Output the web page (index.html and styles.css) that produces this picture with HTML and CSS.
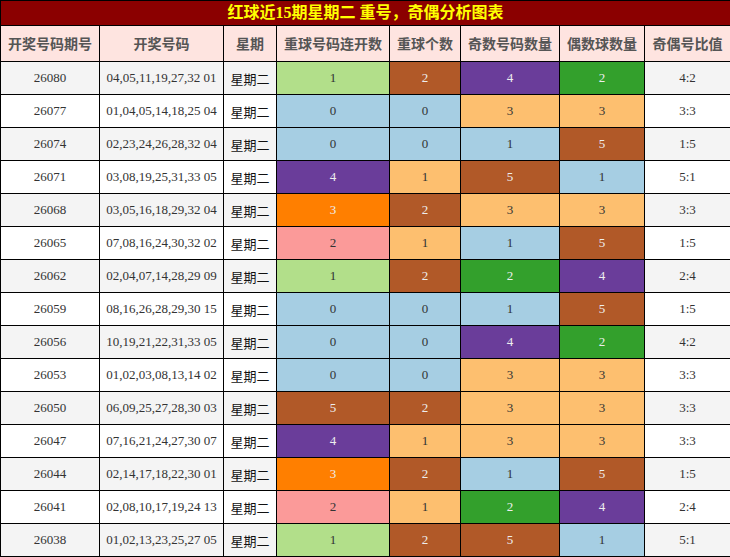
FILE: index.html
```html
<!DOCTYPE html>
<html>
<head>
<meta charset="utf-8">
<link rel="stylesheet" href="styles.css">
</head>
<body>
<table class="chart">
<colgroup>
<col class="c1"><col class="c2"><col class="c3"><col class="c4"><col class="c5"><col class="c6"><col class="c7"><col class="c8">
</colgroup>
<thead>
<tr class="title"><th colspan="8">红球近15期星期二 重号，奇偶分析图表</th></tr>
<tr class="head"><th>开奖号码期号</th><th>开奖号码</th><th>星期</th><th>重球号码连开数</th><th>重球个数</th><th>奇数号码数量</th><th>偶数球数量</th><th>奇偶号比值</th></tr>
</thead>
<tbody>
<tr><td>26080</td><td>04,05,11,19,27,32 01</td><td class="wk">星期二</td><td class="lg">1</td><td class="br">2</td><td class="pu">4</td><td class="gr">2</td><td>4:2</td></tr>
<tr><td>26077</td><td>01,04,05,14,18,25 04</td><td class="wk">星期二</td><td class="lb">0</td><td class="lb">0</td><td class="lo">3</td><td class="lo">3</td><td>3:3</td></tr>
<tr><td>26074</td><td>02,23,24,26,28,32 04</td><td class="wk">星期二</td><td class="lb">0</td><td class="lb">0</td><td class="lb">1</td><td class="br">5</td><td>1:5</td></tr>
<tr><td>26071</td><td>03,08,19,25,31,33 05</td><td class="wk">星期二</td><td class="pu">4</td><td class="lo">1</td><td class="br">5</td><td class="lb">1</td><td>5:1</td></tr>
<tr><td>26068</td><td>03,05,16,18,29,32 04</td><td class="wk">星期二</td><td class="or">3</td><td class="br">2</td><td class="lo">3</td><td class="lo">3</td><td>3:3</td></tr>
<tr><td>26065</td><td>07,08,16,24,30,32 02</td><td class="wk">星期二</td><td class="pk">2</td><td class="lo">1</td><td class="lb">1</td><td class="br">5</td><td>1:5</td></tr>
<tr><td>26062</td><td>02,04,07,14,28,29 09</td><td class="wk">星期二</td><td class="lg">1</td><td class="br">2</td><td class="gr">2</td><td class="pu">4</td><td>2:4</td></tr>
<tr><td>26059</td><td>08,16,26,28,29,30 15</td><td class="wk">星期二</td><td class="lb">0</td><td class="lb">0</td><td class="lb">1</td><td class="br">5</td><td>1:5</td></tr>
<tr><td>26056</td><td>10,19,21,22,31,33 05</td><td class="wk">星期二</td><td class="lb">0</td><td class="lb">0</td><td class="pu">4</td><td class="gr">2</td><td>4:2</td></tr>
<tr><td>26053</td><td>01,02,03,08,13,14 02</td><td class="wk">星期二</td><td class="lb">0</td><td class="lb">0</td><td class="lo">3</td><td class="lo">3</td><td>3:3</td></tr>
<tr><td>26050</td><td>06,09,25,27,28,30 03</td><td class="wk">星期二</td><td class="br">5</td><td class="br">2</td><td class="lo">3</td><td class="lo">3</td><td>3:3</td></tr>
<tr><td>26047</td><td>07,16,21,24,27,30 07</td><td class="wk">星期二</td><td class="pu">4</td><td class="lo">1</td><td class="lo">3</td><td class="lo">3</td><td>3:3</td></tr>
<tr><td>26044</td><td>02,14,17,18,22,30 01</td><td class="wk">星期二</td><td class="or">3</td><td class="br">2</td><td class="lb">1</td><td class="br">5</td><td>1:5</td></tr>
<tr><td>26041</td><td>02,08,10,17,19,24 13</td><td class="wk">星期二</td><td class="pk">2</td><td class="lo">1</td><td class="gr">2</td><td class="pu">4</td><td>2:4</td></tr>
<tr><td>26038</td><td>01,02,13,23,25,27 05</td><td class="wk">星期二</td><td class="lg">1</td><td class="br">2</td><td class="br">5</td><td class="lb">1</td><td>5:1</td></tr>
</tbody>
</table>
</body>
</html>
```
FILE: styles.css
```css
html, body {
  margin: 0;
  padding: 0;
  background: #ffffff;
}
.chart {
  border-collapse: collapse;
  table-layout: fixed;
  width: 730px;
  font-family: "Liberation Serif", "Noto Sans CJK SC", serif;
}
.c1 { width: 99px; }
.c2 { width: 124px; }
.c3 { width: 53px; }
.c4 { width: 113px; }
.c5 { width: 71px; }
.c6 { width: 99px; }
.c7 { width: 85px; }
.c8 { width: 86px; }
.chart th, .chart td {
  border: 1px solid #000;
  padding: 0;
  text-align: center;
  white-space: nowrap;
  overflow: hidden;
}
.title th {
  background: #8b0000;
  color: #ffff00;
  font-size: 16px;
  font-weight: bold;
  height: 24px;
  line-height: 24px;
  font-family: "Liberation Serif", "Noto Sans CJK SC", serif;
}
.head th {
  background: #fee4e0;
  color: #555555;
  font-family: "Noto Sans CJK SC", sans-serif;
  font-size: 14px;
  font-weight: bold;
  height: 35px;
  line-height: 35px;
}
.chart td {
  height: 32px;
  line-height: 32px;
  font-size: 13px;
  color: #333333;
}
.chart tbody tr:nth-child(odd) td { background: #f4f4f4; }
.chart tbody tr:nth-child(even) td { background: #ffffff; }
.chart td.wk {
  font-family: "Noto Sans CJK SC", sans-serif;
  font-size: 13px;
  color: #111;
  height: 30px;
  line-height: 30px;
  padding-top: 2px;
}
.chart tbody tr td.lg { background: #b2df8a; color: #333; }
.chart tbody tr td.lb { background: #a6cee3; color: #333; }
.chart tbody tr td.lo { background: #fdbf6f; color: #333; }
.chart tbody tr td.pk { background: #fb9a99; color: #333; }
.chart tbody tr td.br { background: #b15928; color: #eeeeee; }
.chart tbody tr td.pu { background: #6a3d9a; color: #eeeeee; }
.chart tbody tr td.gr { background: #33a02c; color: #eeeeee; }
.chart tbody tr td.or { background: #ff7f00; color: #eeeeee; }
```
